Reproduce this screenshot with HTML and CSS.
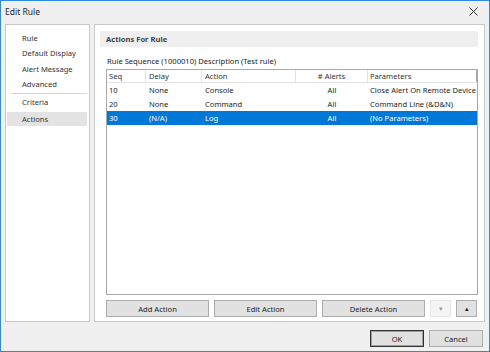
FILE: index.html
```html
<!DOCTYPE html>
<html>
<head>
<meta charset="utf-8">
<link rel="stylesheet" href="styles.css">
</head>
<body>
<div class="window">
  <div class="titlebar">
    <span class="title">Edit Rule</span>
    <svg class="close" width="9" height="9" viewBox="0 0 9 9"><path d="M0.5 0.5L8.5 8.5M8.5 0.5L0.5 8.5" stroke="#333" stroke-width="1" fill="none"/></svg>
  </div>
  <div class="main">
    <div class="nav">
      <div class="nav-item">Rule</div>
      <div class="nav-item">Default Display</div>
      <div class="nav-item">Alert Message</div>
      <div class="nav-item">Advanced</div>
      <div class="nav-sep"></div>
      <div class="nav-item">Criteria</div>
      <div class="nav-item selected">Actions</div>
    </div>
    <div class="content">
      <div class="section-head">Actions For Rule</div>
      <div class="desc">Rule Sequence (1000010) Description (Test rule)</div>
      <div class="table">
        <div class="row head">
          <div class="cell">Seq</div>
          <div class="cell">Delay</div>
          <div class="cell">Action</div>
          <div class="cell center"># Alerts</div>
          <div class="cell">Parameters</div>
        </div>
        <div class="row">
          <div class="cell">10</div>
          <div class="cell">None</div>
          <div class="cell">Console</div>
          <div class="cell center">All</div>
          <div class="cell">Close Alert On Remote Device</div>
        </div>
        <div class="row">
          <div class="cell">20</div>
          <div class="cell">None</div>
          <div class="cell">Command</div>
          <div class="cell center">All</div>
          <div class="cell">Command Line (&amp;D&amp;N)</div>
        </div>
        <div class="row sel">
          <div class="cell">30</div>
          <div class="cell">(N/A)</div>
          <div class="cell">Log</div>
          <div class="cell center">All</div>
          <div class="cell">(No Parameters)</div>
        </div>
      </div>
      <div class="actions">
        <button class="btn wide">Add Action</button>
        <button class="btn wide">Edit Action</button>
        <button class="btn wide">Delete Action</button>
        <button class="btn small disabled">&#9662;</button>
        <button class="btn small">&#9652;</button>
      </div>
    </div>
  </div>
  <div class="footer">
    <button class="btn dlg default">OK</button>
    <button class="btn dlg">Cancel</button>
  </div>
</div>
</body>
</html>
```

FILE: styles.css
```css
* { box-sizing: border-box; }
html, body { margin: 0; padding: 0; }
body {
  font-family: "Noto Sans", "Open Sans", sans-serif;
  font-size: 7.6px;
  color: #1e1e1e;
}
.window {
  width: 490px;
  height: 352px;
  border: 1px solid #2b8ae3;
  background: #f0f0f0;
  display: flex;
  flex-direction: column;
}
.titlebar {
  height: 23px;
  display: flex;
  align-items: center;
  justify-content: space-between;
  padding: 0 11px 2px 4px;
}
.title { font-size: 8.5px; color: #222; }
.close { display: block; }
.main {
  display: flex;
  gap: 4px;
  padding: 0 4px 0 4px;
  height: 298px;
}
.nav {
  width: 86px;
  background: #fff;
  border: 1px solid #c9c9c9;
  padding-top: 6px;
  display: flex;
  flex-direction: column;
}
.nav-item {
  height: 15.3px;
  line-height: 15.3px;
  padding-left: 16px;
  color: #333;
}
.nav-sep {
  height: 1px;
  background: #d8d8d8;
  margin: 1px 2px 1px 5px;
}
.nav-item.selected {
  background: #e3e3e3;
  margin: 2px 2px 0 1px;
  height: 14px;
  line-height: 14px;
  padding-left: 15px;
}
.content {
  flex: 1;
  background: #fff;
  border: 1px solid #c9c9c9;
  padding: 6px 6px 4px 5px;
  display: flex;
  flex-direction: column;
}
.section-head {
  height: 16px;
  line-height: 16px;
  background: #efefef;
  padding-left: 6px;
  font-weight: bold;
  color: #444;
}
.desc {
  margin: 7px 0 0 7px;
  height: 15px;
  line-height: 15px;
  color: #222;
}
.table {
  margin-left: 6px;
  flex: 1;
  border: 1px solid #a9a9a9;
  background: #fff;
}
.row {
  display: grid;
  grid-template-columns: 39px 56px 94px 72px 1fr;
  height: 14px;
  line-height: 14px;
}
.row.head { height: 13px; line-height: 13px; border-bottom: 1px solid #e2e2e2; }
.row.head .cell { border-right: 1px solid #e2e2e2; color: #333; }
.row.head .cell:last-child { border-right: 1px solid #a9a9a9; }
.cell { padding-left: 2px; white-space: nowrap; overflow: hidden; }
.cell:nth-child(2), .cell:nth-child(3) { padding-left: 3px; }
.cell.center { text-align: center; padding-left: 0; }
.row.sel { background: #0078d7; color: #fff; }
.row.sel .cell { color: #fff; }
.actions {
  display: flex;
  gap: 5px;
  margin: 5px 1px 0 6px;
  height: 17px;
}
.btn {
  font-family: inherit;
  font-size: 7.6px;
  color: #222;
  background: #e1e1e1;
  border: 1px solid #adadad;
  padding: 0;
  margin: 0;
  height: 17px;
}
.btn.wide { width: 103px; }
.btn.small { width: 21px; font-size: 7px; }
.btn.disabled { background: #f4f4f4; border-color: #e6e6e6; color: #9a9a9a; }
.footer {
  flex: 1;
  display: flex;
  justify-content: flex-end;
  align-items: flex-start;
  gap: 5px;
  padding: 8px 6px 0 0;
}
.btn.dlg { width: 54px; height: 17px; }
.btn.default { border: 1px solid #333; box-shadow: inset 0 0 0 1px #9f9f9f; }
```
